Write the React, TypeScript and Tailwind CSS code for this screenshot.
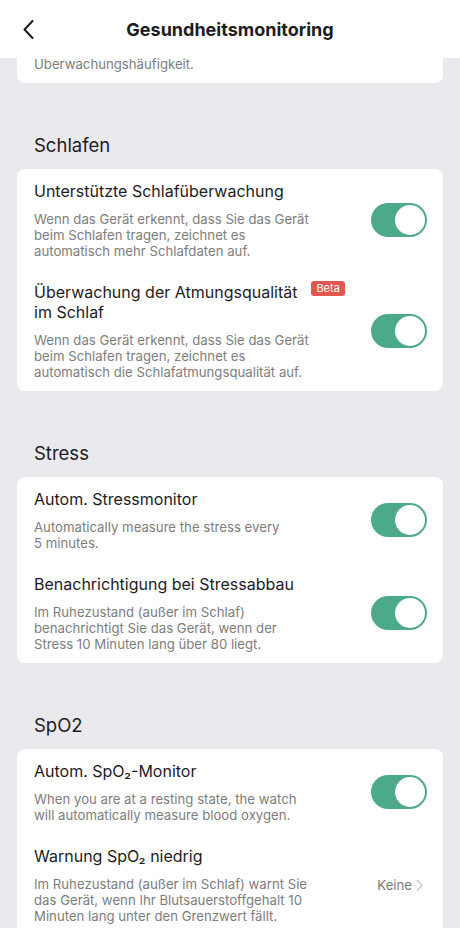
import React from "react";

type Row = {
  title: React.ReactNode;
  lines: string[];
  beta?: boolean;
  right?: "toggle" | "keine";
};

const sections: { name: string; rows: Row[] }[] = [
  {
    name: "Schlafen",
    rows: [
      {
        title: "Unterstützte Schlafüberwachung",
        lines: [
          "Wenn das Gerät erkennt, dass Sie das Gerät",
          "beim Schlafen tragen, zeichnet es",
          "automatisch mehr Schlafdaten auf.",
        ],
        right: "toggle",
      },
      {
        title: (
          <>
            Überwachung der Atmungsqualität
            <br />
            im Schlaf
          </>
        ),
        beta: true,
        lines: [
          "Wenn das Gerät erkennt, dass Sie das Gerät",
          "beim Schlafen tragen, zeichnet es",
          "automatisch die Schlafatmungsqualität auf.",
        ],
        right: "toggle",
      },
    ],
  },
  {
    name: "Stress",
    rows: [
      {
        title: "Autom. Stressmonitor",
        lines: ["Automatically measure the stress every", "5 minutes."],
        right: "toggle",
      },
      {
        title: "Benachrichtigung bei Stressabbau",
        lines: [
          "Im Ruhezustand (außer im Schlaf)",
          "benachrichtigt Sie das Gerät, wenn der",
          "Stress 10 Minuten lang über 80 liegt.",
        ],
        right: "toggle",
      },
    ],
  },
  {
    name: "SpO2",
    rows: [
      {
        title: "Autom. SpO₂-Monitor",
        lines: [
          "When you are at a resting state, the watch",
          "will automatically measure blood oxygen.",
        ],
        right: "toggle",
      },
      {
        title: "Warnung SpO₂ niedrig",
        lines: [
          "Im Ruhezustand (außer im Schlaf) warnt Sie",
          "das Gerät, wenn Ihr Blutsauerstoffgehalt 10",
          "Minuten lang unter den Grenzwert fällt.",
        ],
        right: "keine",
      },
    ],
  },
];

const Toggle = () => (
  <div className="flex h-[34px] w-[56px] shrink-0 items-center justify-end rounded-full bg-[#4caa88] p-[2px]">
    <div className="h-[30px] w-[30px] rounded-full bg-white" />
  </div>
);

const Keine = () => (
  <div className="mr-[4px] flex shrink-0 items-center gap-[4px] text-[13.2px] leading-[16px] text-[#7a7a7a]">
    <span>Keine</span>
    <svg width="7" height="13" viewBox="0 0 7 13" fill="none">
      <polyline points="1,1 6,6.5 1,12" stroke="#c8c8c8" strokeWidth="1.2" />
    </svg>
  </div>
);

const SettingRow = ({ row }: { row: Row }) => (
  <div className="flex items-center">
    <div className="min-w-0 flex-1">
      <div className="flex items-start">
        <div className="text-[16px] leading-[20px] text-[#1c1c1e]">{row.title}</div>
        {row.beta && (
          <span className="-mt-[1px] ml-[14px] rounded-[3px] bg-[#e5554f] px-[5px] text-[11px] leading-[15px] text-white">
            Beta
          </span>
        )}
      </div>
      <p className="mt-[10px] text-[13.2px] leading-[16px] text-[#7d7d7d]">
        {row.lines.map((l, i) => (
          <React.Fragment key={i}>
            {l}
            {i < row.lines.length - 1 && <br />}
          </React.Fragment>
        ))}
      </p>
    </div>
    {row.right === "toggle" ? <Toggle /> : <Keine />}
  </div>
);

export default function App() {
  return (
    <div
      className="min-h-screen bg-[#e9e9ee] pb-10"
      style={{ fontFamily: "Inter, 'Noto Sans', sans-serif" }}
    >
      <header className="grid h-[58px] grid-cols-[1fr_auto_1fr] items-center bg-white">
        <div className="pl-[23px]">
          <svg width="11" height="19" viewBox="0 0 11 19" fill="none">
            <polyline
              points="9.5,1 1.5,9.5 9.5,18"
              stroke="#1c1c1e"
              strokeWidth="2"
              strokeLinecap="round"
              strokeLinejoin="round"
            />
          </svg>
        </div>
        <h1 className="text-[18px] font-bold text-[#1c1c1e]">Gesundheitsmonitoring</h1>
        <div />
      </header>

      <div className="mx-[17px] h-[25px] overflow-hidden rounded-b-[8px] bg-white pl-[17px]">
        <p className="-mt-[2px] text-[13.2px] leading-[16px] text-[#7d7d7d]">
          Überwachungshäufigkeit.
        </p>
      </div>

      {sections.map((s) => (
        <section key={s.name}>
          <h2 className="mt-[48px] mb-[10px] pl-[34px] text-[18.5px] leading-[28px] text-[#1c1c1e]">
            {s.name}
          </h2>
          <div className="mx-[17px] flex flex-col gap-[23px] rounded-[8px] bg-white pb-[11px] pl-[17px] pr-[16px] pt-[12px]">
            {s.rows.map((r, i) => (
              <SettingRow key={i} row={r} />
            ))}
          </div>
        </section>
      ))}
    </div>
  );
}
